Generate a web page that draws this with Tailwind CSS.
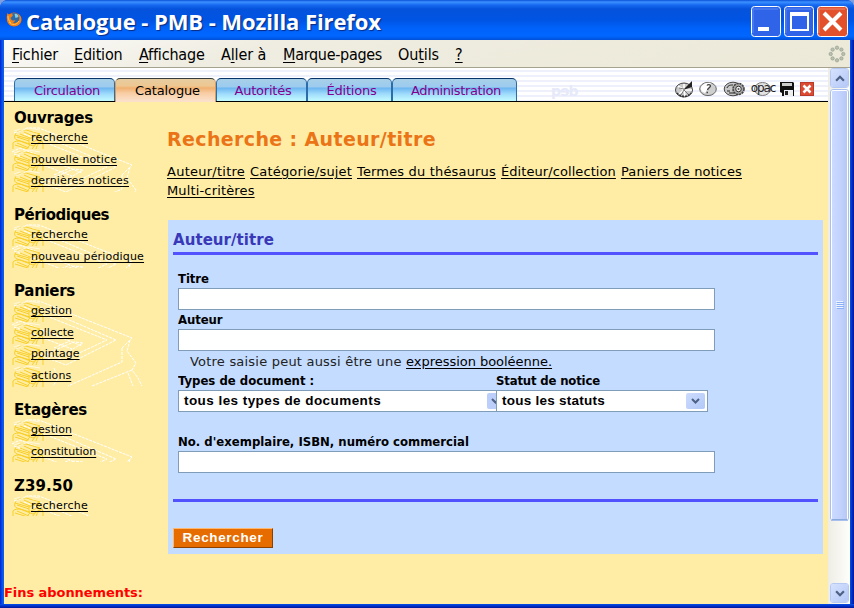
<!DOCTYPE html>
<html lang="fr">
<head>
<meta charset="utf-8">
<title>Catalogue - PMB</title>
<script src="https://cdn.jsdelivr.net/npm/@tailwindcss/browser@4"></script>
</head>
<body class="w-[854px] h-[608px] overflow-hidden bg-[#7f9fe0] font-['DejaVu_Sans',Verdana,sans-serif] text-black">
<svg width="0" height="0" class="absolute">
  <symbol id="books" viewBox="0 0 34 22"><g fill="none" stroke="#f8cf28" stroke-width="1">
    <path d="M3 8C5 4 9 3 14 3L28 7 17 12ZM3 8c-1 3 0 4 2 5l13 4M17 12v5l10-5 3-4M12 5l11 5M8 7l10 4M5 10l12 4M1 16c2-2 4-2 7-2M1 16v6M3 18l13 4M8 14l13 5 8-5M5 16l12 5M18 18l-4 4M28 13l3 3v6M24 22c1-5 4-7 7-8M20 22l4-5M28 8l-4 4"/></g>
    <path d="M4 6 16 1l12 2M2 4l6-2" fill="none" stroke="#fff8dc" stroke-width="1"/></symbol>
  <symbol id="sketch" viewBox="0 0 131 87"><g fill="none" stroke="#fff" stroke-width="1" stroke-dasharray="3 1">
    <path d="M2 6 15 1 27 1 120 38M20 4 104 40 54 65 20 52M12 7 95 40 52 60 30 52M2 27 60 49M0 25 8 21 70 46M38 52 62 42 71 43 54 53M42 48 58 41M110 48V62L56 86M118 40 115 51 124 63 120 70 126 78 130 86M120 70 80 86M116 73 121 86M42 68 46 78 41 86M110 48 120 38"/></g></symbol>
  <symbol id="arrow" viewBox="0 0 9 6"><path d="M1 1 4.5 4.5 8 1" fill="none" stroke="#4d6185" stroke-width="2"/></symbol>
</svg>
<div class="w-[854px] h-[608px] flex flex-col rounded-t-[8px] overflow-hidden bg-[#0a48d8]">
  <!-- title bar -->
  <header class="h-[40px] shrink-0 flex items-center pl-[5px] pr-[6px] bg-linear-[180deg,#0a4fd8_0px,#3b92ff_2px,#1768f0_5px,#0553dc_9px,#0054e3_20px,#0062fa_28px,#0066ff_36px,#0050d8_40px]">
    <svg class="w-[18px] h-[17px] -mt-px" viewBox="0 0 17 17"><circle cx="8.500" cy="8.500" r="7" fill="#d8641c"/><circle cx="9" cy="7" r="5" fill="#2c6ca8"/><path d="M9 3c2-1 4 1 4 3l-3 1z" fill="#7fd0e8"/><path d="M2 2c1 2 2 1 4 1 1 0 2 1 1 2L5 7c1 3 3 3 5 2-1 3-4 3-4 1 2 4 8 2 8-3 0-2-1-3-2-4 4 1 5 6 3 9-3 5-11 4-13-1C1 8 1 5 2 2Z" fill="#f0801c"/><path d="M2.500 5c0 3 1 5 3 7M3.500 11c3 4 8 3 10-1" fill="none" stroke="#fbc54a"/></svg>
    <h1 class="ml-[3px] mt-px text-[22px] leading-[30px] font-bold text-white tracking-[-0.08px] font-['Open_Sans','Trebuchet_MS',sans-serif] [text-shadow:1px_1px_1px_#0a2a80] whitespace-nowrap">Catalogue - PMB - Mozilla Firefox</h1>
    <div class="ml-auto flex gap-[3px] mt-[3px]">
      <svg class="w-[30px] h-[31px]" viewBox="0 0 30 31"><rect x=".5" y=".5" width="29" height="30" rx="3" fill="#2f63e8" stroke="#fff"/><path d="M2 3h25M2 3v24" stroke="#6f9bf8" opacity=".7"/><path d="M7 21h11v4H7z" fill="#fff"/></svg>
      <svg class="w-[30px] h-[31px]" viewBox="0 0 30 31"><rect x=".5" y=".5" width="29" height="30" rx="3" fill="#2f63e8" stroke="#fff"/><path d="M2 3h25M2 3v24" stroke="#6f9bf8" opacity=".7"/><path d="M6 6h19v19H6zM8 10v13h15V10z" fill="#fff" fill-rule="evenodd"/></svg>
      <svg class="w-[31px] h-[31px]" viewBox="0 0 31 31"><rect x=".5" y=".5" width="30" height="30" rx="3" fill="#e2502c" stroke="#fff"/><path d="M2 3h26M2 3v24" stroke="#f09a80" opacity=".8"/><path d="m7 7 17 17M24 7 7 24" stroke="#fff" stroke-width="4"/></svg>
    </div>
  </header>
  <div class="flex flex-1 min-h-0">
    <div class="w-[4px] bg-linear-to-r from-[#0019cf] via-[#0a50e8] to-[#1060f0]"></div>
    <div class="flex-1 min-w-0 flex flex-col">
      <!-- menu bar -->
      <nav class="h-[28px] shrink-0 flex items-center pt-[2px] pl-[8px] pr-[4px] bg-linear-[165deg,#fbfaf8_0%,#efede1_30%,#ece9d8_100%] border-b border-[#a5a290] font-['DejaVu_Sans_Condensed','DejaVu_Sans',Tahoma,sans-serif] font-stretch-condensed text-[16px] leading-[20px] whitespace-nowrap">
        <span class="w-[62px] tracking-[-0.13px]"><u class="underline-offset-2">F</u>ichier</span>
        <span class="w-[65px] tracking-[-0.19px]"><u class="underline-offset-2">E</u>dition</span>
        <span class="w-[82px] tracking-[-0.18px]"><u class="underline-offset-2">A</u>ffichage</span>
        <span class="w-[62px] tracking-[-0.14px]">A<u class="underline-offset-2">l</u>ler à</span>
        <span class="w-[115px] tracking-[-0.3px]"><u class="underline-offset-2">M</u>arque-pages</span>
        <span class="w-[57px] tracking-[-0.1px]">Ou<u class="underline-offset-2">t</u>ils</span>
        <span><u class="underline-offset-2">?</u></span>
        <svg class="ml-auto w-[18px] h-[18px] -mt-[2px]" viewBox="0 0 18 18"><g fill="#b9c0ae" stroke="#8f988a" stroke-width=".6"><circle cx="9" cy="2.7" r="1.7"/><circle cx="13.4" cy="4.6" r="1.7"/><circle cx="15.3" cy="9" r="1.7"/><circle cx="13.4" cy="13.4" r="1.7"/><circle cx="9" cy="15.3" r="1.7"/><circle cx="4.6" cy="13.4" r="1.7"/><circle cx="2.7" cy="9" r="1.7"/><circle cx="4.6" cy="4.6" r="1.7"/></g></svg>
      </nav>
      <div class="flex flex-1 min-h-0">
        <!-- page -->
        <div class="w-[824px] flex flex-col bg-[#ffeda6]">
          <div class="h-[34px] shrink-0 flex border-b border-black pl-[10px] bg-[repeating-linear-gradient(180deg,#fff_0px,#fff_2px,#eef0fc_2px,#eef0fc_4px,#fff_4px,#fff_5px)]">
            <div class="flex mt-[10px] h-[23px] text-[13px] leading-[24px] text-center text-[#84008c] whitespace-nowrap">
              <a class="w-[101px] pl-[5px] tracking-[-0.33px] rounded-t-[5px] border border-b-0 border-t-[#07356b] border-x-[#2a6da8] bg-linear-[180deg,#a8cfe8_0px,#9ccbef_8px,#6cb5f0_9px,#a0dcfc_15px,#c4fbff_22px]">Circulation</a>
              <a class="w-[101px] h-[24px] pl-[4px] tracking-[-0.13px] text-black rounded-t-[5px] border border-b-0 border-t-[#343c3c] border-x-[#d79b5a] bg-linear-[180deg,#e6cda0_0px,#eec792_7px,#f0b070_9px,#f8cda4_14px,#fbe0cb_22px]">Catalogue</a>
              <a class="w-[91px] pl-[3px] tracking-[-0.22px] rounded-t-[5px] border border-b-0 border-t-[#07356b] border-x-[#2a6da8] bg-linear-[180deg,#a8cfe8_0px,#9ccbef_8px,#6cb5f0_9px,#a0dcfc_15px,#c4fbff_22px]">Autorités</a>
              <a class="w-[85px] pl-[4px] tracking-[-0.22px] rounded-t-[5px] border border-b-0 border-t-[#07356b] border-x-[#2a6da8] bg-linear-[180deg,#a8cfe8_0px,#9ccbef_8px,#6cb5f0_9px,#a0dcfc_15px,#c4fbff_22px]">Éditions</a>
              <a class="w-[125px] pl-[3px] tracking-[-0.37px] rounded-t-[5px] border border-b-0 border-t-[#07356b] border-x-[#2a6da8] bg-linear-[180deg,#a8cfe8_0px,#9ccbef_8px,#6cb5f0_9px,#a0dcfc_15px,#c4fbff_22px]">Administration</a>
            </div>
            <span class="ml-[34px] mt-[14px] text-[14px] leading-[18px] font-bold tracking-[-1px] text-[#e6e9f9]">pɘb</span>
            <div class="ml-auto mr-[14px] mt-[12px] flex items-start">
              <svg class="w-[20px] h-[18px] mr-[4px]" viewBox="0 0 20 18"><ellipse cx="10" cy="10" rx="8.5" ry="7" fill="#c9c9c9" stroke="#444"/><path d="M10 10 4 6M10 10 5 14M10 10l1 6M10 10h8M10 10V4" stroke="#fff" stroke-width="1.6"/><path d="m9 10 9-9v6z" fill="#222"/><path d="M10 9 5 8M10 10l-3 5M10 10l4 4" stroke="#777"/><path d="M3 13c3 4 10 5 14 0" fill="none" stroke="#333" stroke-width="1.6" stroke-dasharray="2 1"/></svg>
              <svg class="w-[20px] h-[18px] mr-[5px]" viewBox="0 0 20 18"><ellipse cx="10" cy="9" rx="8.3" ry="6.6" fill="#cfcfcf" stroke="#666"/><path d="M3 7c2-4 7-5 10-4L7 13C4 12 2 10 3 7Z" fill="#fff"/><path d="M9 5.500c1-1.500 3.500-1 3.500.5S10 8 9.500 10M8.500 12.500h1.500" fill="none" stroke="#444" stroke-width="1.300"/></svg>
              <svg class="w-[23px] h-[18px] mr-[4px]" viewBox="0 0 23 18"><ellipse cx="10" cy="9" rx="8.800" ry="6.800" fill="#c8c8c8" stroke="#444"/><path d="M4 8c1-3 4-3 6-3M4 11h3M6 13h5" stroke="#222" fill="none"/><circle cx="15.500" cy="9" r="5.500" fill="#aaa" stroke="#444" stroke-width="1.600" stroke-dasharray="2.200 .7"/><circle cx="15.500" cy="9" r="2.800" fill="#eee" stroke="#333"/><circle cx="15.500" cy="9" r="1" fill="#555"/></svg>
              <span class="relative w-[26px] h-[18px] mr-[4px] flex justify-center text-[12px] leading-[16px] tracking-[-1.1px] text-[#222]"><svg class="absolute inset-0 w-[26px] h-[18px]" viewBox="0 0 26 18"><ellipse cx="12.500" cy="9" rx="8" ry="6.500" fill="#e2e2e2" stroke="#777"/></svg><span class="relative">opac</span></span>
              <svg class="w-[14px] h-[18px] mr-[6px]" viewBox="0 0 14 18"><path d="M0 2h13l1 1v13l-1 0V10H4v6H2V13L0 12Z" fill="#111"/><path d="M2 3h10v3H2z" fill="#ccc"/><path d="M4 11h9v5H4z" fill="#eee"/><path d="M5 11h3v4H5z" fill="#222"/></svg>
              <svg class="w-[14px] h-[18px]" viewBox="0 0 14 18"><rect x=".5" y="2.500" width="13" height="13" fill="#dc4a34" stroke="#b83a28"/><path d="m3.500 5.500 7 7m0-7-7 7" stroke="#fff" stroke-width="2.500"/></svg>
            </div>
          </div>
          <div class="flex flex-1 min-h-0">
            <!-- side menu -->
            <aside class="w-[163px] shrink-0 flex flex-col pt-[6px] pb-[2px] whitespace-nowrap">
              <h3 class="h-[19px] pl-[10px] text-[15px] leading-[21px] font-bold tracking-[-0.2px]">Ouvrages</h3>
              <div class="relative overflow-hidden ml-[8px] w-[131px] mb-[13.4px] text-[11px]">
                <svg class="absolute left-0 top-0 w-[131px] h-[87px]"><use href="#sketch"/></svg>
                <p class="relative h-[21.67px] pl-[19px] leading-[21.5px] tracking-[0.23px]"><svg class="absolute left-0 top-0 w-[34px] h-[22px]"><use href="#books"/></svg><a class="relative underline underline-offset-2">recherche</a></p>
                <p class="relative h-[21.67px] pl-[19px] leading-[21px] tracking-[0.12px]"><svg class="absolute left-0 top-0 w-[34px] h-[22px]"><use href="#books"/></svg><a class="relative underline underline-offset-2">nouvelle notice</a></p>
                <p class="relative h-[21.67px] pl-[19px] leading-[21.5px] tracking-[0.19px]"><svg class="absolute left-0 top-0 w-[34px] h-[22px]"><use href="#books"/></svg><a class="relative underline underline-offset-2">dernières notices</a></p>
              </div>
              <h3 class="h-[19px] pl-[10px] text-[15px] leading-[21px] font-bold tracking-[-0.49px]">Périodiques</h3>
              <div class="relative overflow-hidden ml-[8px] w-[135px] mb-[13.4px] text-[11px]">
                <svg class="absolute left-0 top-0 w-[131px] h-[87px]"><use href="#sketch"/></svg>
                <p class="relative h-[21.67px] pl-[19px] leading-[21.5px] tracking-[0.23px]"><svg class="absolute left-0 top-0 w-[34px] h-[22px]"><use href="#books"/></svg><a class="relative underline underline-offset-2">recherche</a></p>
                <p class="relative h-[21.67px] pl-[19px] leading-[21.5px] tracking-[0.17px]"><svg class="absolute left-0 top-0 w-[34px] h-[22px]"><use href="#books"/></svg><a class="relative underline underline-offset-2">nouveau périodique</a></p>
              </div>
              <h3 class="h-[19px] pl-[10px] text-[15px] leading-[21px] font-bold tracking-[-0.29px]">Paniers</h3>
              <div class="relative overflow-hidden ml-[8px] w-[131px] mb-[13.4px] text-[11px]">
                <svg class="absolute left-0 top-0 w-[131px] h-[87px]"><use href="#sketch"/></svg>
                <p class="relative h-[21.67px] pl-[19px] leading-[21.5px] tracking-[0.06px]"><svg class="absolute left-0 top-0 w-[34px] h-[22px]"><use href="#books"/></svg><a class="relative underline underline-offset-2">gestion</a></p>
                <p class="relative h-[21.67px] pl-[19px] leading-[21.5px]"><svg class="absolute left-0 top-0 w-[34px] h-[22px]"><use href="#books"/></svg><a class="relative underline underline-offset-2">collecte</a></p>
                <p class="relative h-[21.67px] pl-[19px] leading-[21.5px]"><svg class="absolute left-0 top-0 w-[34px] h-[22px]"><use href="#books"/></svg><a class="relative underline underline-offset-2">pointage</a></p>
                <p class="relative h-[21.67px] pl-[19px] leading-[21.5px] tracking-[0.1px]"><svg class="absolute left-0 top-0 w-[34px] h-[22px]"><use href="#books"/></svg><a class="relative underline underline-offset-2">actions</a></p>
              </div>
              <h3 class="h-[19px] pl-[10px] text-[15px] leading-[21px] font-bold tracking-[-0.24px]">Etagères</h3>
              <div class="relative overflow-hidden ml-[8px] w-[131px] mb-[13.4px] text-[11px]">
                <svg class="absolute left-0 top-0 w-[131px] h-[87px]"><use href="#sketch"/></svg>
                <p class="relative h-[21.67px] pl-[19px] leading-[21.5px] tracking-[0.06px]"><svg class="absolute left-0 top-0 w-[34px] h-[22px]"><use href="#books"/></svg><a class="relative underline underline-offset-2">gestion</a></p>
                <p class="relative h-[21.67px] pl-[19px] leading-[21.5px]"><svg class="absolute left-0 top-0 w-[34px] h-[22px]"><use href="#books"/></svg><a class="relative underline underline-offset-2">constitution</a></p>
              </div>
              <h3 class="h-[19px] pl-[10px] text-[15px] leading-[21px] font-bold tracking-[0.11px]">Z39.50</h3>
              <div class="relative overflow-hidden ml-[8px] w-[131px] text-[11px]">
                <svg class="absolute left-0 top-0 w-[131px] h-[87px]"><use href="#sketch"/></svg>
                <p class="relative h-[21.67px] pl-[19px] leading-[21.5px] tracking-[0.23px]"><svg class="absolute left-0 top-0 w-[34px] h-[22px]"><use href="#books"/></svg><a class="relative underline underline-offset-2">recherche</a></p>
              </div>
              <p class="mt-auto text-[13px] leading-[18px] font-bold text-[#f00] tracking-[-0.06px]">Fins abonnements:</p>
            </aside>
            <!-- search -->
            <main class="flex-1 min-w-0 pr-[5px] pt-[24px]">
              <h2 class="text-[19px] leading-[26px] font-bold text-[#ea7416] tracking-[0.37px]">Recherche : Auteur/titre</h2>
              <div class="mt-[10px] text-[13px] leading-[19px] flex flex-wrap gap-x-[5px] w-[600px] whitespace-nowrap">
                <a class="underline underline-offset-2 tracking-[0.25px]">Auteur/titre</a>
                <a class="underline underline-offset-2 tracking-[0.17px]">Catégorie/sujet</a>
                <a class="underline underline-offset-2 tracking-[0.17px]">Termes du thésaurus</a>
                <a class="underline underline-offset-2 tracking-[0.08px]">Éditeur/collection</a>
                <a class="underline underline-offset-2 tracking-[0.14px]">Paniers de notices</a>
                <a class="underline underline-offset-2 tracking-[0.15px]">Multi-critères</a>
              </div>
              <form class="ml-px mt-[20px] h-[334px] bg-[#c4dcff] px-[5px] pt-[10px] flex flex-col">
                <h3 class="h-[25px] border-b-[3px] border-[#5252ff] text-[15px] leading-[20px] font-bold text-[#3838b8] tracking-[0.06px]">Auteur/titre</h3>
                <div class="pl-[5px] pt-[15px] flex flex-col font-['DejaVu_Sans_Condensed','DejaVu_Sans',Tahoma,sans-serif] font-stretch-condensed text-[13px] font-bold whitespace-nowrap">
                  <label class="h-[18px] leading-[18px] tracking-[-0.1px]">Titre</label>
                  <div class="w-[537px] h-[22px] bg-white border border-[#7f9db9]"></div>
                  <label class="mt-px h-[18px] leading-[18px] tracking-[-0.1px]">Auteur</label>
                  <div class="w-[537px] h-[22px] bg-white border border-[#7f9db9]"></div>
                  <p class="h-[20px] pl-[12px] leading-[22px] font-normal font-['DejaVu_Sans',Verdana,sans-serif] font-stretch-normal tracking-[0.21px] text-[#222]">Votre saisie peut aussi être une <a class="underline underline-offset-2 text-black tracking-[-0.03px]">expression booléenne.</a></p>
                  <div class="flex">
                    <div class="w-[318px] overflow-hidden">
                      <label class="block h-[19px] leading-[19px]">Types de document :</label>
                      <div class="w-[328px] h-[22px] bg-white border border-[#7f9db9] flex items-center pl-[5px] pr-px font-['Liberation_Sans',Arial,sans-serif] font-stretch-normal text-[13.5px]"><span class="tracking-[0.44px]">tous les types de documents</span><span class="ml-auto w-[17px] h-[16px] rounded-[2px] bg-[#bccffb] flex items-center justify-center"><svg class="w-[9px] h-[6px]"><use href="#arrow"/></svg></span></div>
                    </div>
                    <div class="w-[212px]">
                      <label class="block h-[19px] leading-[19px] tracking-[-0.17px]">Statut de notice</label>
                      <div class="h-[22px] bg-white border border-[#7f9db9] flex items-center pl-[5px] pr-[2px] font-['Liberation_Sans',Arial,sans-serif] font-stretch-normal text-[13.5px]"><span class="tracking-[0.25px]">tous les statuts</span><span class="ml-auto w-[19px] h-[16px] rounded-[2px] bg-linear-to-br from-[#cddcfd] to-[#b2c8f8] flex items-center justify-center"><svg class="w-[9px] h-[6px]"><use href="#arrow"/></svg></span></div>
                    </div>
                  </div>
                  <label class="mt-[21px] h-[18px] leading-[18px]">No. d'exemplaire, ISBN, numéro commercial</label>
                  <div class="w-[537px] h-[22px] bg-white border border-[#7f9db9]"></div>
                </div>
                <div class="mt-[26px] h-[3px] bg-[#5252ff]"></div>
                <button type="button" class="mt-[26px] w-[100px] h-[20px] bg-[#e66c00] border border-t-[#ffb870] border-l-[#ffb870] border-b-[#8a4000] border-r-[#8a4000] text-white font-bold font-['Liberation_Sans',Arial,sans-serif] text-[13.5px] leading-[18px] tracking-[0.65px]">Rechercher</button>
              </form>
            </main>
          </div>
        </div>
        <!-- scrollbar -->
        <div class="flex-1 flex flex-col bg-linear-to-r from-[#eeede5] to-[#fefefb] pl-px pr-px">
          <div class="ml-px h-[20px] rounded-[3px] border border-white bg-linear-to-br from-[#d6e2fe] to-[#b4c8f7] outline outline-[#b5c9f2] -outline-offset-1 flex items-center justify-center"><svg class="w-[10px] h-[7px] rotate-180"><use href="#arrow"/></svg></div>
          <div class="ml-px mt-px h-[432px] rounded-[3px] border-2 border-white border-b-[#8aa9dc] bg-linear-to-r from-[#cbdafe] via-[#c3d3fd] to-[#b7c8f7] outline outline-[#a9c0ee] -outline-offset-1 flex items-center justify-center"><svg class="w-[8px] h-[8px]" viewBox="0 0 8 8"><path d="M0 .5h7M0 2.500h7M0 4.500h7M0 6.500h7" stroke="#eef4fe"/><path d="M1 1.500h7M1 3.500h7M1 5.500h7M1 7.500h7" stroke="#8cb0f8"/></svg></div>
          <div class="mt-auto mb-px ml-px h-[20px] rounded-[3px] border border-white bg-linear-to-br from-[#d6e2fe] to-[#b4c8f7] outline outline-[#b5c9f2] -outline-offset-1 flex items-center justify-center"><svg class="w-[10px] h-[7px]"><use href="#arrow"/></svg></div>
        </div>
      </div>
    </div>
    <div class="w-[4px] bg-linear-to-r from-[#0a50e8] via-[#0030c8] to-[#001498]"></div>
  </div>
  <div class="h-[4px] shrink-0 bg-linear-to-b from-[#0a50e8] via-[#0030c8] to-[#001498]"></div>
</div>
</body>
</html>
